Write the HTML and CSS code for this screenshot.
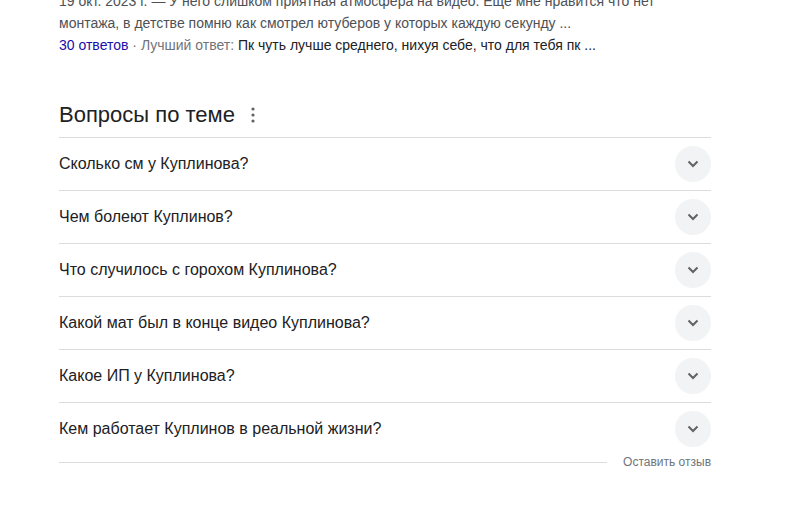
FILE: index.html
```html
<!DOCTYPE html>
<html lang="ru">
<head>
    <meta charset="UTF-8">
    <meta name="viewport" content="width=device-width, initial-scale=1.0">
    <title>Вопросы по теме</title>
    <link rel="stylesheet" href="styles.css">
</head>
<body>
    <div class="page">
        <div class="snippet">
            <div class="snippet-text">19 окт. 2023 г. — У него слишком приятная атмосфера на видео. Еще мне нравится что нет монтажа, в детстве помню как смотрел ютуберов у которых каждую секунду ...</div>
            <div class="snippet-meta">
                <a class="answers" href="#">30 ответов</a> · Лучший ответ: <span class="best">Пк чуть лучше среднего, нихуя себе, что для тебя пк ...</span>
            </div>
        </div>

        <div class="related">
            <div class="related-head">
                <h2 class="related-title">Вопросы по теме</h2>
                <svg class="more" width="6" height="18" viewBox="0 0 6 18">
                    <circle cx="3" cy="3" r="1.6" fill="#5f6368"/>
                    <circle cx="3" cy="9" r="1.6" fill="#5f6368"/>
                    <circle cx="3" cy="15" r="1.6" fill="#5f6368"/>
                </svg>
            </div>

            <div class="question">
                <span class="q-text">Сколько см у Куплинова?</span>
                <span class="toggle"><svg width="12" height="8" viewBox="0 0 12 8"><path d="M1.5 1.5 6 6l4.5-4.5" fill="none" stroke="#5f6368" stroke-width="2"/></svg></span>
            </div>
            <div class="question">
                <span class="q-text">Чем болеют Куплинов?</span>
                <span class="toggle"><svg width="12" height="8" viewBox="0 0 12 8"><path d="M1.5 1.5 6 6l4.5-4.5" fill="none" stroke="#5f6368" stroke-width="2"/></svg></span>
            </div>
            <div class="question">
                <span class="q-text">Что случилось с горохом Куплинова?</span>
                <span class="toggle"><svg width="12" height="8" viewBox="0 0 12 8"><path d="M1.5 1.5 6 6l4.5-4.5" fill="none" stroke="#5f6368" stroke-width="2"/></svg></span>
            </div>
            <div class="question">
                <span class="q-text">Какой мат был в конце видео Куплинова?</span>
                <span class="toggle"><svg width="12" height="8" viewBox="0 0 12 8"><path d="M1.5 1.5 6 6l4.5-4.5" fill="none" stroke="#5f6368" stroke-width="2"/></svg></span>
            </div>
            <div class="question">
                <span class="q-text">Какое ИП у Куплинова?</span>
                <span class="toggle"><svg width="12" height="8" viewBox="0 0 12 8"><path d="M1.5 1.5 6 6l4.5-4.5" fill="none" stroke="#5f6368" stroke-width="2"/></svg></span>
            </div>
            <div class="question">
                <span class="q-text">Кем работает Куплинов в реальной жизни?</span>
                <span class="toggle"><svg width="12" height="8" viewBox="0 0 12 8"><path d="M1.5 1.5 6 6l4.5-4.5" fill="none" stroke="#5f6368" stroke-width="2"/></svg></span>
            </div>

            <div class="feedback">
                <div class="feedback-line"></div>
                <span class="feedback-text">Оставить отзыв</span>
            </div>
        </div>
    </div>
</body>
</html>
```

FILE: styles.css
```css
body {
    margin: 0;
    background-color: #fff;
    font-family: "Liberation Sans", Arial, sans-serif;
    color: #202124;
    overflow: hidden;
}

.page {
    width: 652px;
    padding-left: 59px;
}

.snippet {
    margin-top: -10px;
    font-size: 14px;
    line-height: 22px;
    color: #4d5156;
}

.snippet-meta {
    color: #70757a;
}

.answers {
    color: #1a0dab;
    text-decoration: none;
}

.best {
    color: #202124;
}

.related {
    margin-top: 45px;
}

.related-head {
    display: flex;
    align-items: center;
    height: 28px;
    padding-bottom: 8px;
}

.related-title {
    margin: 0;
    font-size: 22px;
    font-weight: normal;
    line-height: 28px;
    color: #202124;
}

.more {
    margin-left: 15px;
}

.question {
    display: flex;
    align-items: center;
    justify-content: space-between;
    height: 52px;
    border-top: 1px solid #dadce0;
    font-size: 16px;
    color: #202124;
    cursor: pointer;
}

.toggle {
    display: flex;
    align-items: center;
    justify-content: center;
    width: 36px;
    height: 36px;
    border-radius: 50%;
    background-color: #f1f3f4;
}

.feedback {
    display: flex;
    align-items: center;
    gap: 16px;
    height: 14px;
}

.feedback-line {
    flex: 1;
    border-top: 1px solid #dadce0;
}

.feedback-text {
    font-size: 12px;
    line-height: 14px;
    color: #70757a;
}
```
